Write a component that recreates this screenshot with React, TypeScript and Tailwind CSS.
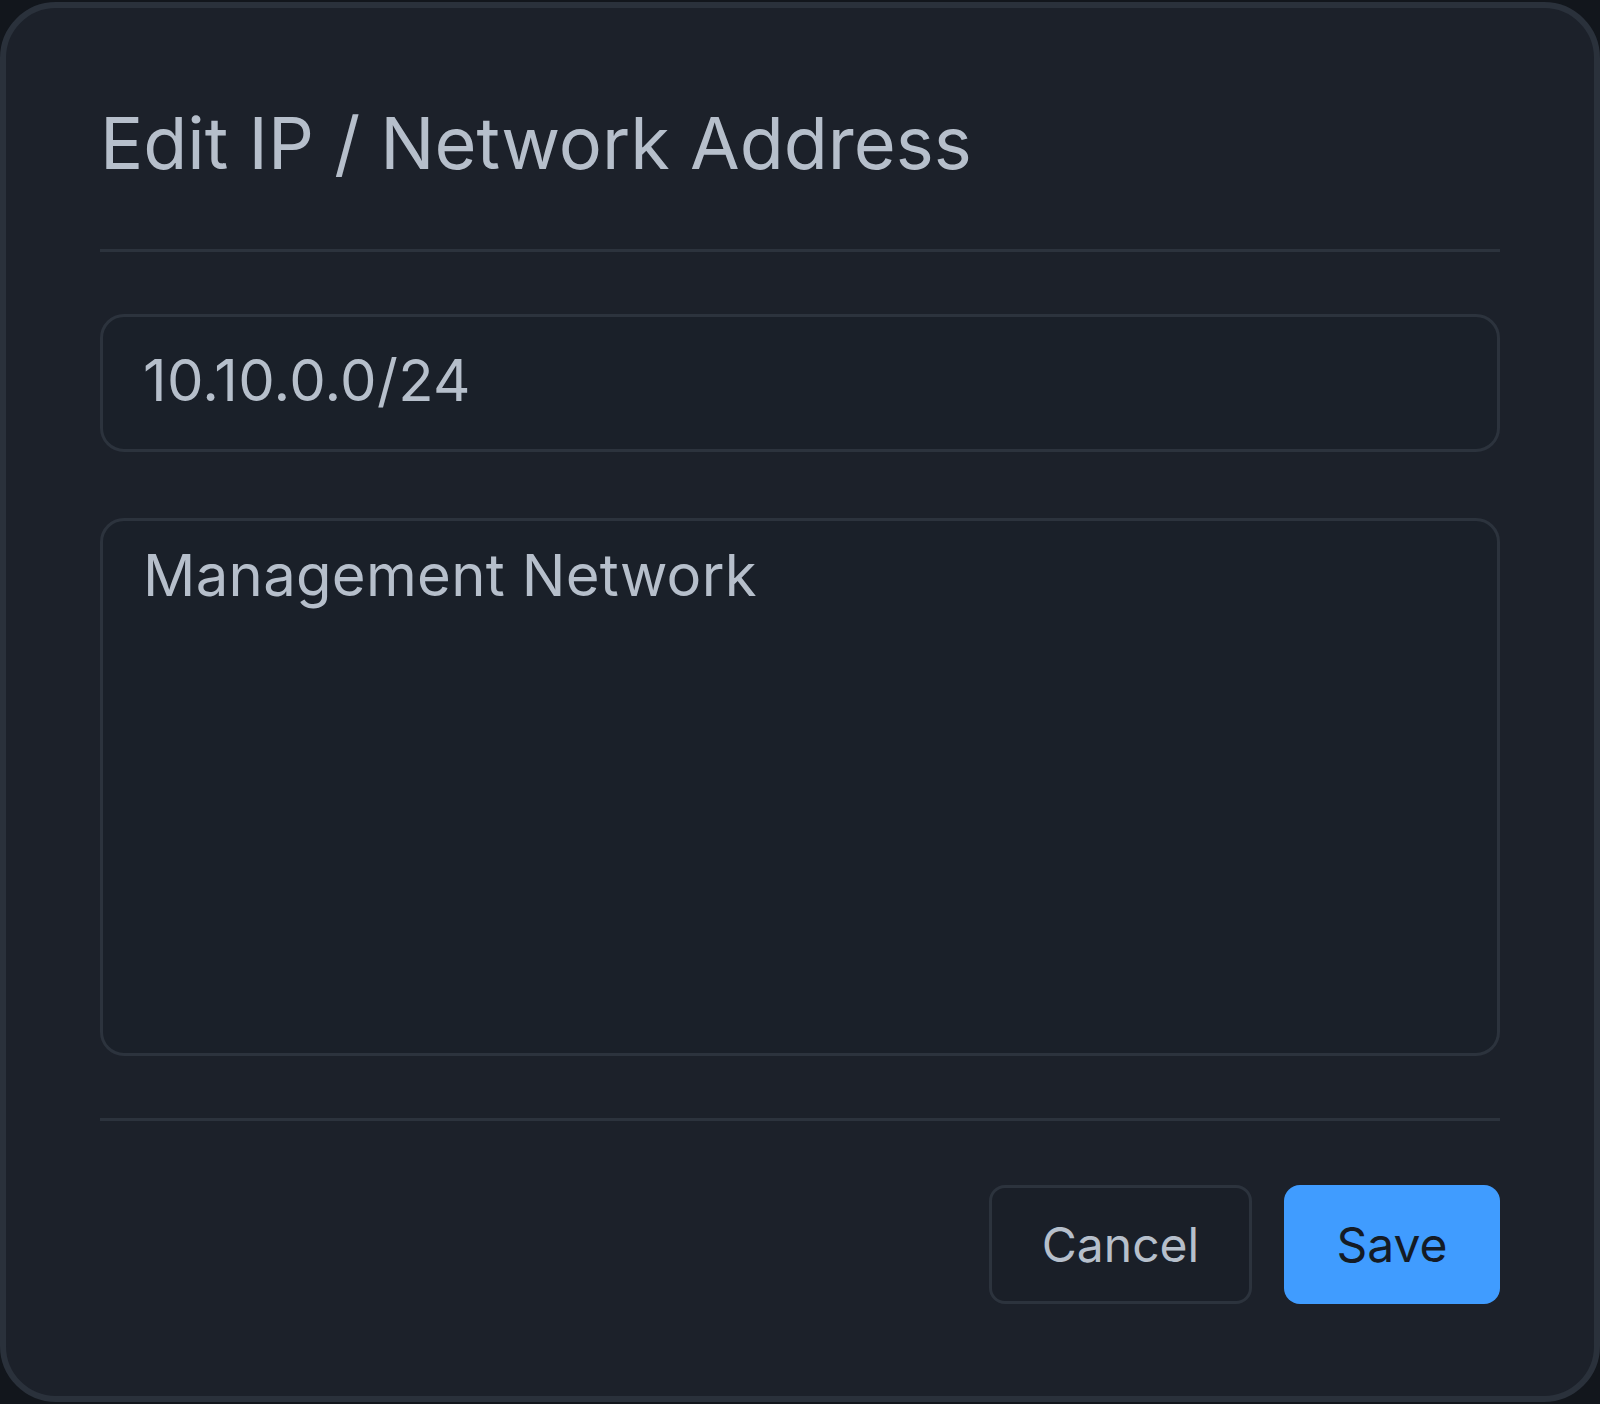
import React from "react";

export default function App() {
    return (
        <div className="w-[1600px] h-[1404px] bg-[#12161c] pt-[2px] font-['Inter','Noto_Sans',sans-serif]">
            <div className="h-[1400px] w-full flex flex-col rounded-[56px] border-[6px] border-[#2a313b] bg-[#1c212a] px-[94px] pt-[90px]">
                <h2 className="text-[72px] leading-[90px] font-normal text-[#b6bfcb]">
                    Edit IP / Network Address
                </h2>
                <div className="mt-[61px] h-[3px] bg-[#2c333d]" />
                <input
                    className="mt-[62px] h-[138px] w-full rounded-[24px] border-[3px] border-[#2c333d] bg-[#1a2029] px-[40px] pb-[6px] text-[58px] tracking-[0.3px] leading-[84px] text-[#b6bfcb] outline-none"
                    type="text"
                    defaultValue="10.10.0.0/24"
                    readOnly
                />
                <textarea
                    className="mt-[66px] h-[538px] w-full resize-none rounded-[24px] border-[3px] border-[#2c333d] bg-[#1a2029] px-[40px] pt-[19px] text-[58px] tracking-[0.3px] leading-[70px] text-[#b6bfcb] outline-none"
                    defaultValue="Management Network"
                    readOnly
                />
                <div className="mt-[62px] h-[3px] bg-[#2c333d]" />
                <div className="mt-[64px] flex justify-end gap-[32px]">
                    <button className="h-[119px] w-[263px] rounded-[16px] border-[3px] border-[#2c333d] bg-[#1a1f28] text-[48px] text-[#b6bfcb]">
                        Cancel
                    </button>
                    <button className="h-[119px] w-[216px] rounded-[16px] bg-[#409cff] text-[48px] text-[#141b25]">
                        Save
                    </button>
                </div>
            </div>
        </div>
    );
}
